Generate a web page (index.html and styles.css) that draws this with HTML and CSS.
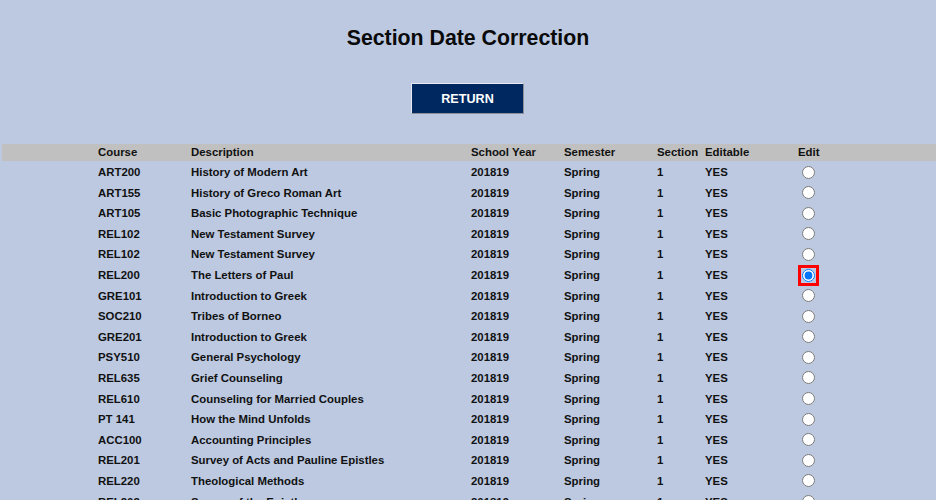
FILE: index.html
```html
<!DOCTYPE html>
<html>
<head>
<meta charset="utf-8">
<title>Section Date Correction</title>
<link rel="stylesheet" href="styles.css">
</head>
<body>
<h1 class="title">Section Date Correction</h1>
<div class="actions"><button class="btn-return" type="button">RETURN</button></div>
<div class="grid">
  <div class="row head"><span></span><span>Course</span><span>Description</span><span>School Year</span><span>Semester</span><span>Section</span><span>Editable</span><span>Edit</span></div>
  <div class="row"><span></span><span>ART200</span><span>History of Modern Art</span><span>201819</span><span>Spring</span><span>1</span><span>YES</span><span><input class="radio" type="radio" name="edit"></span></div>
  <div class="row"><span></span><span>ART155</span><span>History of Greco Roman Art</span><span>201819</span><span>Spring</span><span>1</span><span>YES</span><span><input class="radio" type="radio" name="edit"></span></div>
  <div class="row"><span></span><span>ART105</span><span>Basic Photographic Technique</span><span>201819</span><span>Spring</span><span>1</span><span>YES</span><span><input class="radio" type="radio" name="edit"></span></div>
  <div class="row"><span></span><span>REL102</span><span>New Testament Survey</span><span>201819</span><span>Spring</span><span>1</span><span>YES</span><span><input class="radio" type="radio" name="edit"></span></div>
  <div class="row"><span></span><span>REL102</span><span>New Testament Survey</span><span>201819</span><span>Spring</span><span>1</span><span>YES</span><span><input class="radio" type="radio" name="edit"></span></div>
  <div class="row"><span></span><span>REL200</span><span>The Letters of Paul</span><span>201819</span><span>Spring</span><span>1</span><span>YES</span><span><input class="radio selected" type="radio" name="edit" checked></span></div>
  <div class="row"><span></span><span>GRE101</span><span>Introduction to Greek</span><span>201819</span><span>Spring</span><span>1</span><span>YES</span><span><input class="radio" type="radio" name="edit"></span></div>
  <div class="row"><span></span><span>SOC210</span><span>Tribes of Borneo</span><span>201819</span><span>Spring</span><span>1</span><span>YES</span><span><input class="radio" type="radio" name="edit"></span></div>
  <div class="row"><span></span><span>GRE201</span><span>Introduction to Greek</span><span>201819</span><span>Spring</span><span>1</span><span>YES</span><span><input class="radio" type="radio" name="edit"></span></div>
  <div class="row"><span></span><span>PSY510</span><span>General Psychology</span><span>201819</span><span>Spring</span><span>1</span><span>YES</span><span><input class="radio" type="radio" name="edit"></span></div>
  <div class="row"><span></span><span>REL635</span><span>Grief Counseling</span><span>201819</span><span>Spring</span><span>1</span><span>YES</span><span><input class="radio" type="radio" name="edit"></span></div>
  <div class="row"><span></span><span>REL610</span><span>Counseling for Married Couples</span><span>201819</span><span>Spring</span><span>1</span><span>YES</span><span><input class="radio" type="radio" name="edit"></span></div>
  <div class="row"><span></span><span>PT 141</span><span>How the Mind Unfolds</span><span>201819</span><span>Spring</span><span>1</span><span>YES</span><span><input class="radio" type="radio" name="edit"></span></div>
  <div class="row"><span></span><span>ACC100</span><span>Accounting Principles</span><span>201819</span><span>Spring</span><span>1</span><span>YES</span><span><input class="radio" type="radio" name="edit"></span></div>
  <div class="row"><span></span><span>REL201</span><span>Survey of Acts and Pauline Epistles</span><span>201819</span><span>Spring</span><span>1</span><span>YES</span><span><input class="radio" type="radio" name="edit"></span></div>
  <div class="row"><span></span><span>REL220</span><span>Theological Methods</span><span>201819</span><span>Spring</span><span>1</span><span>YES</span><span><input class="radio" type="radio" name="edit"></span></div>
  <div class="row"><span></span><span>REL202</span><span>Survey of the Epistles</span><span>201819</span><span>Spring</span><span>1</span><span>YES</span><span><input class="radio" type="radio" name="edit"></span></div>
</div>
</body>
</html>
```
FILE: styles.css
```css
html, body {
  margin: 0;
  padding: 0;
  background: #bcc9e1;
  font-family: "Liberation Sans", Arial, sans-serif;
  color: #111;
}
.title {
  margin: 0;
  padding-top: 26px;
  font-size: 21.3px;
  line-height: 24px;
  font-weight: bold;
  text-align: center;
  color: #0a0a0a;
}
.actions {
  display: flex;
  justify-content: center;
  padding-top: 33px;
  padding-right: 1px;
}
.btn-return {
  width: 113px;
  height: 31px;
  margin: 0;
  padding: 0;
  background: #002860;
  color: #fff;
  font-family: "Liberation Sans", Arial, sans-serif;
  font-size: 12.6px;
  font-weight: bold;
  border: 1px solid;
  border-color: #e6e9ef #8a8f98 #8a8f98 #e6e9ef;
  box-sizing: border-box;
}
.grid {
  margin: 30px 0 0 2px;
  font-size: 11.4px;
  font-weight: bold;
}
.row {
  display: grid;
  grid-template-columns: 96px 93px 280px 93px 93px 48px 93px 1fr;
  align-items: center;
  height: 20.6px;
  padding-top: 1.5px;
  box-sizing: border-box;
}
.row.head {
  height: 17px;
  padding-top: 0;
  padding-bottom: 1px;
  background: #c0c0c0;
}
.radio {
  margin: 0 0 0 4px;
  width: 13px;
  height: 13px;
  display: block;
}
.radio.selected {
  outline: 3px solid #ff0000;
  outline-offset: 1px;
}
```
